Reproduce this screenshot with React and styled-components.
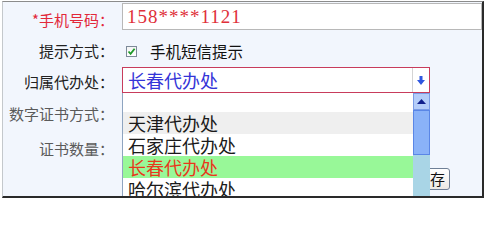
import React from 'react';
import styled, { createGlobalStyle } from 'styled-components';

const Global = createGlobalStyle`
  html, body { margin: 0; padding: 0; background: #ffffff; }
  body { font-family: "Noto Sans CJK SC", "Noto Sans", sans-serif; }
`;

const Frame = styled.div`
  position: relative;
  margin: 1px 0 0 2px;
  width: 479px;
  height: 194px;
  border-top: 1px solid #8c8c8c;
  border-left: 1px solid #c4c8cc;
  border-right: 2px solid #2a2a2a;
  border-bottom: 2px solid #2a2a2a;
  background: #f2f6fd;
  overflow: hidden;
  display: flex;
  flex-direction: column;
`;

const Row = styled.div`
  display: grid;
  grid-template-columns: 119px 1fr;
  height: ${p => p.$h}px;
  flex: ${p => (p.$grow ? 1 : 'none')};
`;

const Label = styled.div`
  align-self: center;
  text-align: right;
  padding-right: 8px;
  font-size: 15px;
  line-height: 20px;
  white-space: nowrap;
  color: ${p => p.$color || '#222'};
  transform: translateY(${p => p.$dy || 0}px);
`;

const Cell = styled.div`
  display: flex;
  align-items: ${p => p.$align || 'center'};
  min-width: 0;
`;

const PhoneInput = styled.div`
  box-sizing: border-box;
  margin-top: 1px;
  width: 100%;
  height: 27px;
  border: 1px solid #b8b8b8;
  background: #ffffff;
  padding-left: 4px;
  font-family: "Liberation Serif", serif;
  font-size: 19px;
  letter-spacing: 1px;
  line-height: 25px;
  color: #e0303a;
`;

const CheckBox = styled.span`
  box-sizing: border-box;
  margin-left: 4px;
  width: 11px;
  height: 11px;
  border: 1px solid #7d8a99;
  background: linear-gradient(#f4f4f4, #ffffff);
  display: flex;
  align-items: center;
  justify-content: center;
`;

const CheckText = styled.span`
  margin-left: 13px;
  font-size: 15.5px;
  line-height: 20px;
  color: #111;
`;

const SelectWrap = styled.div`
  position: relative;
  margin-top: 1px;
  width: 308px;
  height: 26px;
`;

const SelectBox = styled.div`
  box-sizing: border-box;
  width: 100%;
  height: 100%;
  border: 1px solid #c83c5c;
  background: #ffffff;
  display: flex;
`;

const SelectValue = styled.div`
  flex: 1;
  padding-left: 5px;
  font-size: 18px;
  line-height: 24px;
  color: #3434d8;
`;

const ArrowBtn = styled.div`
  width: 16px;
  border-left: 1px solid #d4d4d4;
  display: flex;
  align-items: center;
  justify-content: center;
`;

const List = styled.div`
  position: absolute;
  top: 100%;
  left: 0;
  box-sizing: border-box;
  width: 308px;
  height: 112px;
  background: #ffffff;
  border-left: 1px solid #8ea4c0;
  display: flex;
  z-index: 2;
`;

const Items = styled.div`
  flex: 1;
  display: flex;
  flex-direction: column;
`;

const Spacer = styled.div`
  height: 19px;
`;

const Item = styled.div`
  height: 22px;
  padding-left: 5px;
  font-size: 18px;
  line-height: 22px;
  white-space: nowrap;
  background: ${p => p.$bg || '#ffffff'};
  color: ${p => p.$color || '#1a1a1a'};
`;

const Scrollbar = styled.div`
  width: 17px;
  display: flex;
  flex-direction: column;
`;

const ScrollBtn = styled.div`
  box-sizing: border-box;
  height: 17px;
  background: #b4cdf9;
  border: 1px solid #7a9ce6;
  display: flex;
  align-items: center;
  justify-content: center;
`;

const Thumb = styled.div`
  box-sizing: border-box;
  height: 45px;
  background: #8ab2f8;
  border: 1px solid #5a86e6;
`;

const Track = styled.div`
  flex: 1;
  background: #a9d5e6;
`;

const SaveButton = styled.button`
  box-sizing: border-box;
  margin-left: 288px;
  height: 22px;
  padding: 0 4px;
  border: 1px solid #6f7f96;
  border-radius: 3px;
  background: linear-gradient(#ffffff, #ece9e4);
  font-family: "Noto Sans CJK SC", sans-serif;
  font-size: 15px;
  line-height: 20px;
  color: #111;
`;

const items = [
  { name: '天津代办处', bg: '#efefef' },
  { name: '石家庄代办处' },
  { name: '长春代办处', bg: '#98f898', color: '#e8381c' },
  { name: '哈尔滨代办处' },
];

export default function App() {
  return (
    <>
      <Global />
      <Frame>
        <Row $h={34}>
          <Label $color="#e2283a" $dy={1}>*手机号码：</Label>
          <Cell $align="flex-start">
            <PhoneInput>158****1121</PhoneInput>
          </Cell>
        </Row>
        <Row $h={30}>
          <Label>提示方式：</Label>
          <Cell>
            <CheckBox>
              <svg width="9" height="9" viewBox="0 0 9 9">
                <path d="M1.5 4.5 L3.6 6.8 L7.6 1.8" stroke="#1f9a2a" strokeWidth="1.8" fill="none" />
              </svg>
            </CheckBox>
            <CheckText>手机短信提示</CheckText>
          </Cell>
        </Row>
        <Row $h={32}>
          <Label>归属代办处：</Label>
          <Cell $align="flex-start">
            <SelectWrap>
              <SelectBox>
                <SelectValue>长春代办处</SelectValue>
                <ArrowBtn>
                  <svg width="8" height="9" viewBox="0 0 8 9">
                    <path d="M2.5 0 H5.5 V4 H8 L4 9 L0 4 H2.5 Z" fill="#2f57e0" />
                  </svg>
                </ArrowBtn>
              </SelectBox>
              <List>
                <Items>
                  <Spacer />
                  {items.map(it => (
                    <Item key={it.name} $bg={it.bg} $color={it.color}>{it.name}</Item>
                  ))}
                </Items>
                <Scrollbar>
                  <ScrollBtn>
                    <svg width="9" height="5" viewBox="0 0 9 5">
                      <path d="M0 5 L4.5 0 L9 5 Z" fill="#10208c" />
                    </svg>
                  </ScrollBtn>
                  <Thumb />
                  <Track />
                </Scrollbar>
              </List>
            </SelectWrap>
          </Cell>
        </Row>
        <Row $h={31}>
          <Label $color="#5a5a5a">数字证书方式：</Label>
          <Cell />
        </Row>
        <Row $h={39}>
          <Label $color="#5a5a5a">证书数量：</Label>
          <Cell />
        </Row>
        <Row $grow>
          <Label />
          <Cell $align="flex-start">
            <SaveButton>保存</SaveButton>
          </Cell>
        </Row>
      </Frame>
    </>
  );
}
